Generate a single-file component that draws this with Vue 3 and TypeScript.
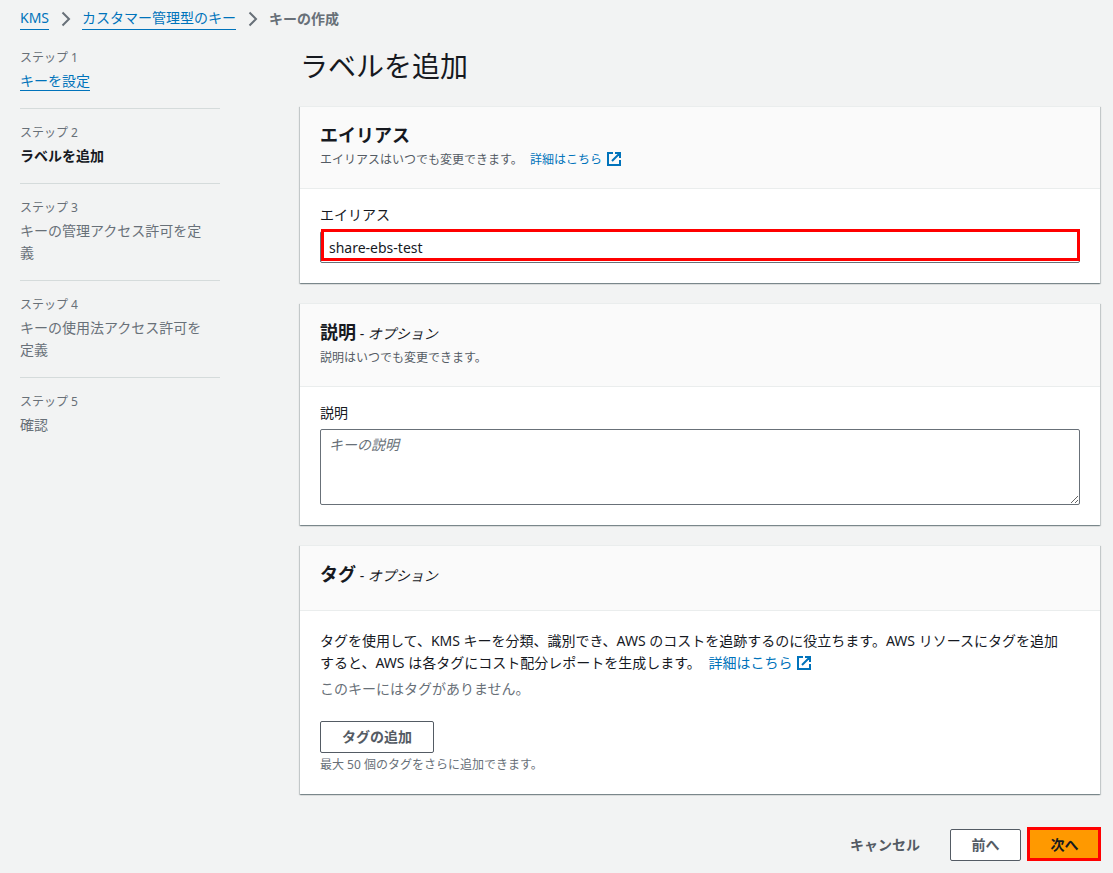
<script setup lang="ts">
import { ref } from 'vue'

interface Step {
  title: string
  state: 'done' | 'current' | 'pending'
}

const steps: Step[] = [
  { title: 'キーを設定', state: 'done' },
  { title: 'ラベルを追加', state: 'current' },
  { title: 'キーの管理アクセス許可を定義', state: 'pending' },
  { title: 'キーの使用法アクセス許可を定義', state: 'pending' },
  { title: '確認', state: 'pending' },
]

const alias = ref('share-ebs-test')
const description = ref('')
</script>

<template>
  <div class="page">
    <nav class="crumbs" aria-label="パンくずリスト">
      <a class="underlined" href="#">KMS</a>
      <svg class="chevron" viewBox="0 0 10 16" aria-hidden="true"><path d="M1.5 1.5 8 8l-6.500 6.500" /></svg>
      <a class="underlined" href="#">カスタマー管理型のキー</a>
      <svg class="chevron" viewBox="0 0 10 16" aria-hidden="true"><path d="M1.5 1.5 8 8l-6.500 6.500" /></svg>
      <span class="here">キーの作成</span>
    </nav>

    <div class="layout">
      <ol class="steps">
        <li v-for="(step, i) in steps" :key="i" class="step">
          <div class="step-no">ステップ {{ i + 1 }}</div>
          <div class="step-title" :class="step.state">
            <a v-if="step.state === 'done'" class="underlined" href="#">{{ step.title }}</a>
            <template v-else>{{ step.title }}</template>
          </div>
        </li>
      </ol>

      <main class="main">
        <h1>ラベルを追加</h1>

        <div class="cards">
          <section class="card">
            <header class="card-head">
              <h2>エイリアス</h2>
              <p class="small">
                エイリアスはいつでも変更できます。
                <a class="ext" href="#">詳細はこちら<svg class="ext-icon" viewBox="0 0 14 14" aria-hidden="true"><path d="M6 1H1v12h12V8M8 1h5v5M13 1 5 9" /></svg></a>
              </p>
            </header>
            <div class="card-body">
              <label for="alias">エイリアス</label>
              <div class="marked field">
                <input id="alias" v-model="alias" type="text" />
              </div>
            </div>
          </section>

          <section class="card">
            <header class="card-head">
              <h2>説明<span class="optional"> - <i>オプション</i></span></h2>
              <p class="small">説明はいつでも変更できます。</p>
            </header>
            <div class="card-body">
              <label for="description">説明</label>
              <textarea id="description" v-model="description" placeholder="キーの説明"></textarea>
            </div>
          </section>

          <section class="card">
            <header class="card-head">
              <h2>タグ<span class="optional"> - <i>オプション</i></span></h2>
            </header>
            <div class="card-body tags">
              <p class="intro">
                タグを使用して、KMS キーを分類、識別でき、AWS のコストを追跡するのに役立ちます。AWS リソースにタグを追加すると、AWS は各タグにコスト配分レポートを生成します。
                <a class="ext" href="#">詳細はこちら<svg class="ext-icon" viewBox="0 0 14 14" aria-hidden="true"><path d="M6 1H1v12h12V8M8 1h5v5M13 1 5 9" /></svg></a>
              </p>
              <p class="empty">このキーにはタグがありません。</p>
              <button class="btn" type="button">タグの追加</button>
              <p class="small limit">最大 50 個のタグをさらに追加できます。</p>
            </div>
          </section>
        </div>

        <div class="actions">
          <button class="btn plain" type="button">キャンセル</button>
          <button class="btn step-btn" type="button">前へ</button>
          <div class="marked next">
            <button class="btn step-btn primary" type="button">次へ</button>
          </div>
        </div>
      </main>
    </div>
  </div>
</template>

<style>
body {
  margin: 0;
  background: #f2f3f3;
}
</style>

<style scoped>
.page {
  box-sizing: border-box;
  min-height: 100vh;
  padding: 7px 13px 12px 20px;
  background: #f2f3f3;
  color: #16191f;
  font-family: "Noto Sans", "Noto Sans CJK JP", sans-serif;
  font-size: 14px;
  line-height: 22px;
}

h1, h2, p, ol {
  margin: 0;
  padding: 0;
}

a {
  color: #0073bb;
  text-decoration: none;
}

.underlined {
  border-bottom: 1px solid #0073bb;
}

.crumbs {
  display: flex;
  align-items: center;
  gap: 12px;
}

.chevron {
  width: 10px;
  height: 16px;
  margin-right: -1px;
  fill: none;
  stroke: #687078;
  stroke-width: 2;
}

.here {
  color: #687078;
  font-weight: 700;
}

.layout {
  display: grid;
  grid-template-columns: 200px minmax(0, 1fr);
  gap: 80px;
  margin-top: 19px;
}

.steps {
  list-style: none;
}

.step {
  padding: 15px 0 16px;
  border-bottom: 1px solid #d5dbdb;
}

.step:first-child {
  padding-top: 0;
}

.step:last-child {
  border-bottom: 0;
}

.step-no {
  margin-bottom: 3px;
  color: #687078;
  font-size: 12px;
  line-height: 18px;
}

.step-title {
  padding-right: 8px;
  color: #687078;
}

.step-title.current {
  color: #16191f;
  font-weight: 700;
}

h1 {
  margin-bottom: 23px;
  font-size: 28px;
  font-weight: 400;
  line-height: 34px;
}

.cards {
  display: grid;
  gap: 20px;
}

.card {
  border-top: 1px solid #eaeded;
  background: #fff;
  box-shadow: 0 1px 1px rgba(0, 28, 36, 0.3), 1px 1px 1px rgba(0, 28, 36, 0.15), -1px 1px 1px rgba(0, 28, 36, 0.15);
}

.card-head {
  padding: 16px 20px 19px;
  border-bottom: 1px solid #eaeded;
  background: #fafafa;
}

h2 {
  padding-bottom: 4px;
  font-size: 18px;
  font-weight: 700;
  line-height: 24px;
}

.optional {
  font-size: 14px;
  font-weight: 400;
  line-height: 22px;
}

.small {
  color: #545b64;
  font-size: 12px;
  line-height: 18px;
}

.ext {
  margin-left: 4px;
}

.ext-icon {
  width: 14px;
  height: 14px;
  margin-left: 5px;
  vertical-align: -2px;
  fill: none;
  stroke: #0073bb;
  stroke-width: 2;
}

.card-body {
  padding: 15px 20px 20px;
}

label {
  display: block;
  margin-bottom: 5px;
}

input,
textarea {
  display: block;
  box-sizing: border-box;
  width: 100%;
  padding: 4px 8px;
  border: 1px solid #687078;
  border-radius: 2px;
  background: #fff;
  color: #16191f;
  font-family: inherit;
  font-size: 14px;
  line-height: 22px;
}

input {
  height: 32px;
}

textarea {
  height: 76px;
  resize: vertical;
}

textarea::placeholder {
  color: #687078;
  font-style: italic;
  opacity: 1;
}

.marked {
  position: relative;
}

.marked::after {
  position: absolute;
  border: 3px solid #f00;
  content: "";
  pointer-events: none;
}

.field::after {
  inset: -2px 0 2px 1px;
}

.next::after {
  inset: -2px -1px 0 -2px;
}

.tags {
  padding-top: 19px;
}

.intro {
  padding-right: 16px;
}

.empty {
  margin: 4px 0 21px;
  color: #687078;
}

.limit {
  margin-top: 3px;
  color: #687078;
}

.btn {
  display: block;
  box-sizing: border-box;
  height: 32px;
  padding: 0 21px;
  border: 1px solid #545b64;
  border-radius: 2px;
  background: #fff;
  color: #545b64;
  font-family: inherit;
  font-size: 14px;
  font-weight: 700;
  line-height: 22px;
}

.btn.step-btn {
  min-width: 71px;
  padding: 0 20px;
}

.btn.plain {
  border-color: transparent;
  background: transparent;
}

.btn.primary {
  border-color: #f90;
  background: #f90;
  color: #16191f;
}

.actions {
  display: flex;
  justify-content: flex-end;
  gap: 8px;
  margin-top: 35px;
}
</style>
